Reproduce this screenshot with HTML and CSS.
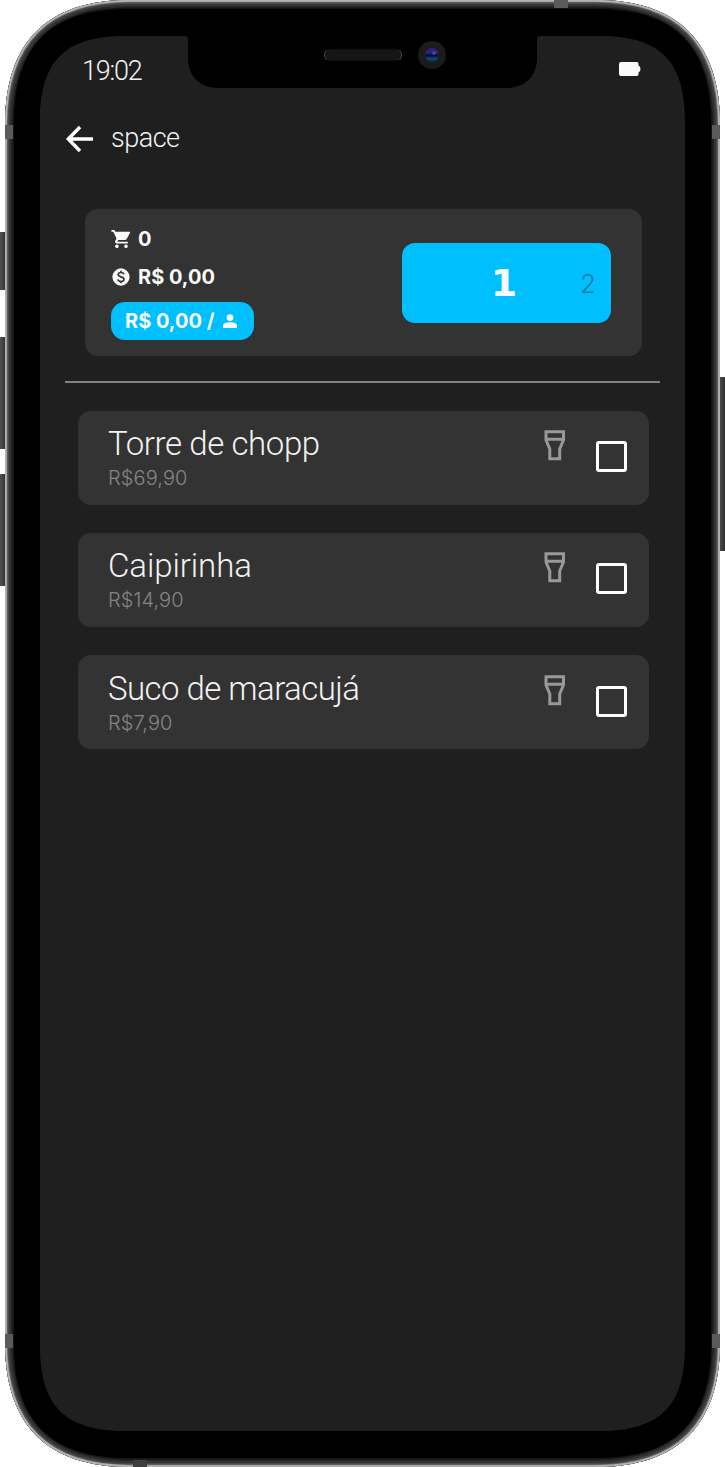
FILE: index.html
```
<!DOCTYPE html>
<html lang="pt-BR">
<head>
<meta charset="utf-8">
<title>space</title>
<link rel="stylesheet" href="styles.css">
</head>
<body>
<svg class="defs" width="0" height="0">
  <symbol id="beer" viewBox="0 0 22 31"><path d="M2 1.800H19.500V10L15.700 19V28.700H5.800V19L2 10ZM2 9.200H19.500" fill="none" stroke="currentColor" stroke-width="3"/></symbol>
</svg>
<div class="phone">
  <svg class="frame" viewBox="0 0 725 1467">
    <defs>
      <linearGradient id="key"><stop stop-color="#555"/><stop offset=".4" stop-color="#444"/><stop offset="1" stop-color="#292929"/></linearGradient>
      <linearGradient id="lens" x2="0" y2="1"><stop stop-color="#282369"/><stop offset=".3" stop-color="#29258c"/><stop offset=".55" stop-color="#080b25"/><stop offset=".75" stop-color="#0d4773"/><stop offset="1" stop-color="#102b46"/></linearGradient>
      <path id="body" d="M5 125C5 42 47 0 130 0H595C678 0 720 42 720 125V1342C720 1425 678 1467 595 1467H130C47 1467 5 1425 5 1342Z"/>
      <clipPath id="shell"><use href="#body"/></clipPath>
    </defs>
    <g fill="url(#key)">
      <rect x="-1" y="232" width="8" height="58" rx="2"/>
      <rect x="-1" y="337" width="8" height="112" rx="2"/>
      <rect x="-1" y="474" width="8" height="112" rx="2"/>
      <rect x="718" y="377" width="8" height="174" rx="2"/>
    </g>
    <use href="#body" fill="#aaa"/>
    <path fill="#080808" d="M14 124C14 45 50 9 129 9H596C675 9 711 45 711 124V1343C711 1422 675 1458 596 1458H129C50 1458 14 1422 14 1343Z"/>
    <g clip-path="url(#shell)" fill="none">
      <use href="#body" stroke="#141414" stroke-width="20"/>
      <use href="#body" stroke="#242424" stroke-width="15"/>
      <use href="#body" stroke="#343434" stroke-width="12"/>
      <use href="#body" stroke="#484848" stroke-width="8"/>
      <use href="#body" stroke="#747474" stroke-width="5"/>
      <use href="#body" stroke="#b2b2b2" stroke-width="3.600"/>
    </g>
    <path d="M14 124C14 45 50 9 129 9H596C675 9 711 45 711 124V1343C711 1422 675 1458 596 1458H129C50 1458 14 1422 14 1343Z"/>
    <g fill="#5a5a5a">
      <path d="M554 0h14v8h-14zM5 125h8v14h-8zM712 125h8v14h-8zM5 1334h8v14h-8zM712 1334h8v14h-8z"/>
      <path d="M133 1460h14v7h-14z" fill="#3c3c3c"/>
    </g>
    <path fill="#1f1f1f" d="M40 121C40 61 65 36 125 36H185Q188 36 188 39V58C188 76 200 88 218 88H507C525 88 537 76 537 58V39Q537 36 540 36H600C660 36 685 61 685 121V1346C685 1406 660 1431 600 1431H125C65 1431 40 1406 40 1346Z"/>
    <rect x="324.500" y="49" width="77" height="12" rx="6" fill="#151515" stroke="#090909"/>
    <path d="M326.500 50Q322.500 55 326.500 60M399.500 50Q403.500 55 399.500 60" fill="none" stroke="#4b4b4b"/>
    <circle cx="432" cy="55" r="14" fill="#1b1b1b"/>
    <circle cx="432" cy="55" r="7" fill="url(#lens)"/>
    <circle cx="434" cy="53" r="1.700" fill="#5549b5"/>
  </svg>
  <main class="screen">
    <header class="status">
      <span class="clock">19:02</span>
      <svg class="battery" width="22" height="14" viewBox="0 0 22 14"><path fill="#fafafa" d="M2 0H18Q19.500 0 19.500 2V3.500Q21.500 4 21.500 7T19.500 10.500V12Q19.500 14 18 14H2Q0 14 0 12V2Q0 0 2 0Z"/></svg>
    </header>
    <nav class="appbar">
      <svg width="28" height="28" viewBox="0 0 28 28"><path d="M15 2L3.300 14L15 26M3.300 14H28" fill="none" stroke="#fff" stroke-width="3.400"/></svg>
      <span class="title">space</span>
    </nav>
    <section class="summary">
      <div class="totals">
        <div class="total"><svg width="20" height="20" viewBox="0.500 1 22 22"><path fill="#fafafa" d="M7 18c-1.100 0-2 .9-2 2s.9 2 2 2 2-.9 2-2-.9-2-2-2zM1 2v2h2l3.600 7.600-1.400 2.400c-.7 1.300.3 3 1.800 3h12v-2H7.400l1.100-2h7.500c.7 0 1.400-.4 1.700-1l3.600-6.500c.4-.7-.1-1.500-.9-1.500H5.200l-.9-2H1zM17 18c-1.100 0-2 .9-2 2s.9 2 2 2 2-.9 2-2-.9-2-2-2z"/></svg><span>0</span></div>
        <div class="total"><svg width="20" height="20" viewBox="1 1 22 22"><circle cx="12" cy="12" r="9.500" fill="#fafafa"/><path d="M15.200 9C14.800 7.600 13.600 7 12 7C10.200 7 8.900 7.900 8.900 9.300C8.900 12.600 15.300 11.100 15.300 14.600C15.300 16.100 14 17 12 17C10.200 17 8.900 16.200 8.700 14.700M12 5V7M12 17V19" fill="none" stroke="#333" stroke-width="1.800"/></svg><span>R$ 0,00</span></div>
        <div class="share"><span>R$ 0,00 /</span><svg width="14" height="14" viewBox="0 0 14 14"><circle cx="7" cy="3.600" r="3.400" fill="#fafafa"/><path fill="#fafafa" d="M0 14V11.500C0 9 4.500 8.300 7 8.300S14 9 14 11.500V14Z"/></svg></div>
      </div>
      <div class="picker"><span class="current">1</span><span class="next">2</span></div>
    </section>
    <hr class="rule">
    <section class="items">
      <article class="item"><div class="info"><span class="name">Torre de chopp</span><span class="price">R$69,90</span></div><svg class="beer"><use href="#beer"/></svg><i class="check"></i></article>
      <article class="item"><div class="info"><span class="name short">Caipirinha</span><span class="price">R$14,90</span></div><svg class="beer"><use href="#beer"/></svg><i class="check"></i></article>
      <article class="item"><div class="info"><span class="name long">Suco de maracujá</span><span class="price">R$7,90</span></div><svg class="beer"><use href="#beer"/></svg><i class="check"></i></article>
    </section>
  </main>
</div>
</body>
</html>
```
FILE: styles.css
```
* { box-sizing: border-box; }
body { margin: 0; background: #fff; font-family: Roboto, sans-serif; color: #f2f2f2; }
svg { display: block; flex: none; }
.defs { position: absolute; }
.phone { position: relative; width: 725px; height: 1467px; overflow: hidden; }
.frame { position: absolute; inset: 0; width: 725px; height: 1467px; }
.screen { position: relative; padding: 54px 65px 0; }
.status { display: flex; justify-content: space-between; height: 34px; padding: 0 19px 0 17px; }
.clock { font-size: 27px; line-height: 34px; font-weight: 350; letter-spacing: -1.2px; }
.battery { margin-top: 8px; }
.appbar { display: flex; gap: 18px; margin-top: 37px; height: 28px; }
.title { font-size: 27px; line-height: 26px; font-weight: 350; letter-spacing: -.5px; }
.summary { display: flex; justify-content: space-between; width: 557.500px; height: 147px; margin: 55.500px 0 0 19.500px; padding: 20px 31px 0 26.500px; border-radius: 13px; background: #333; }
.totals { display: flex; flex-direction: column; align-items: flex-start; font: 700 20px/20px Inter, sans-serif; color: #fafafa; }
.total { display: flex; align-items: center; gap: 7px; height: 20px; margin-bottom: 18px; }
.total + .total { margin-bottom: 15px; }
.share { display: flex; align-items: center; gap: 9px; width: 142.500px; height: 38.500px; padding-left: 14px; border-radius: 14px; background: #00bfff; }
.picker { display: flex; align-items: center; justify-content: flex-end; width: 209px; height: 80px; margin-top: 14.500px; padding-right: 15px; border-radius: 13px; background: #00bfff; }
.current { width: 28px; margin-right: 62px; text-align: center; font: 700 38px/76px "DejaVu Sans", sans-serif; color: #fafafa; }
.next { padding-top: 1px; font: 300 26px/30px Inter, sans-serif; color: #08789d; }
.rule { width: 595px; height: 2px; margin: 25px 0 28px; border: 0; background: #808080; }
.items { display: grid; gap: 28px; margin-left: 13px; }
.item { display: flex; width: 570.500px; height: 94.300px; padding: 19.500px 22px 0 30px; border-radius: 13px; background: #333; }
.info { display: flex; flex: 1; flex-direction: column; align-items: flex-start; }
.name { font-size: 33px; line-height: 28px; font-weight: 350; letter-spacing: -.4px; white-space: nowrap; }
.short { letter-spacing: -.1px; }
.long { letter-spacing: -.55px; }
.price { margin-top: 8px; font: 300 20px/24px Inter, sans-serif; letter-spacing: .1px; color: #858585; }
.beer { width: 22px; height: 31px; margin-right: 30px; color: #999; }
.check { width: 31px; height: 31px; margin-top: 11px; border: 3px solid #fff; border-radius: 3px; }
```
